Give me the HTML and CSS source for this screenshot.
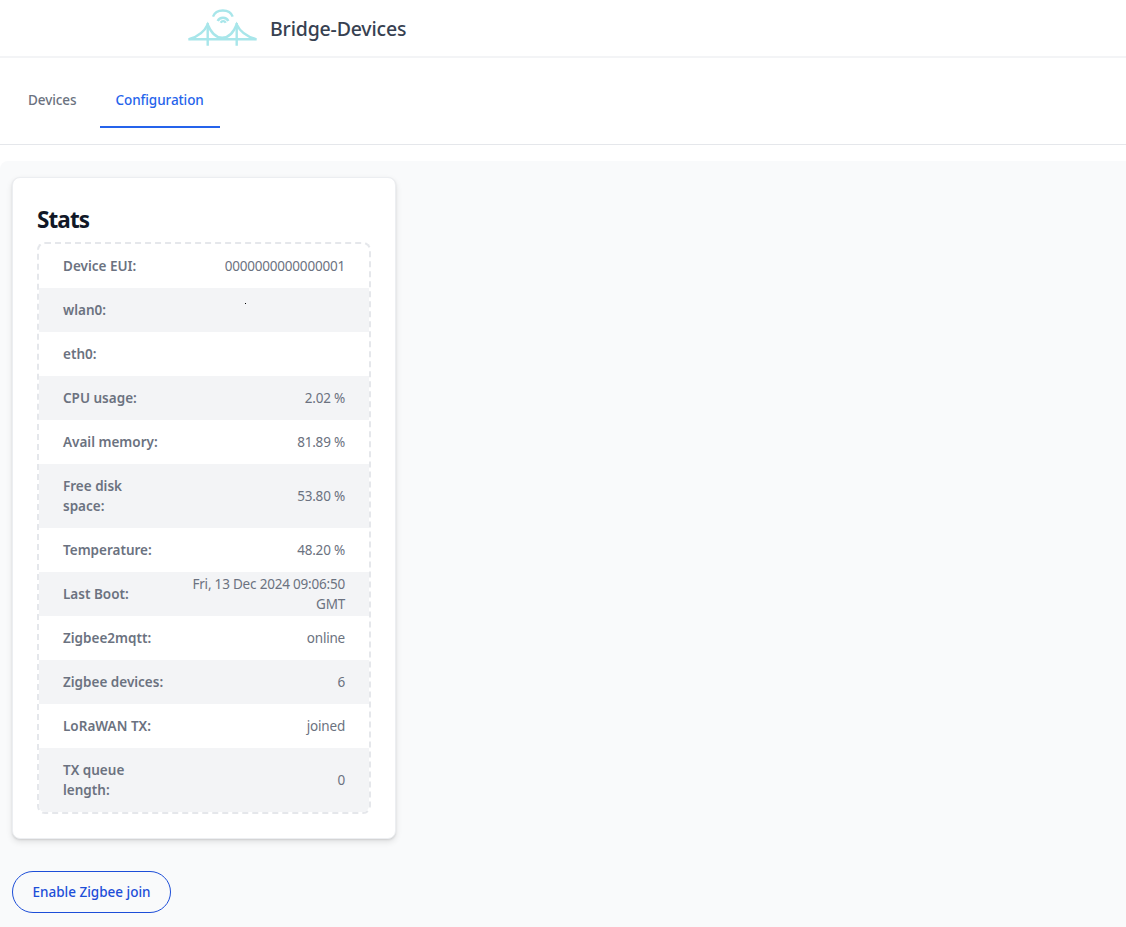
FILE: index.html
```html
<!DOCTYPE html>
<html lang="en">
<head>
    <meta charset="UTF-8">
    <meta name="viewport" content="width=device-width, initial-scale=1.0">
    <title>Bridge-Devices</title>
    <link rel="stylesheet" href="styles.css">
</head>
<body>

<header class="topbar">
    <svg class="logo" width="70" height="46" viewBox="0 0 70 46" fill="none" stroke="#a8e6ea" stroke-width="2.400">
        <path d="M0.300 34.300H68.700"/>
        <path d="M19.700 18V40.700M48.700 18V40.700"/>
        <path d="M1.500 34C10 31.500 16.500 26.500 19.700 19.500C23 27.500 28 32.800 34.200 32.800C40.400 32.800 45.500 27.500 48.700 19.500C52 26.500 59 31.500 67.500 34"/>
        <path d="M25 11.700C28 3.400 41.700 3.400 44.700 11.700"/>
        <path d="M29.700 16C31.500 11.600 38.500 11.600 40.300 16"/>
        <path d="M32.700 17.800C33.800 15.600 36.600 15.600 37.700 17.800"/>
    </svg>
    <span class="brand">Bridge-Devices</span>
</header>

<nav class="tabs">
    <a class="tab" href="#">Devices</a>
    <a class="tab active" href="#">Configuration</a>
</nav>

<main class="content">
    <section class="card">
        <h2>Stats</h2>
        <div class="stats-box">
            <table class="stats">
                <tbody>
                    <tr><th>Device EUI:</th><td>0000000000000001</td></tr>
                    <tr><th>wlan0:</th><td class="has-speck"><span class="speck"></span></td></tr>
                    <tr><th>eth0:</th><td></td></tr>
                    <tr><th>CPU usage:</th><td>2.02 %</td></tr>
                    <tr><th>Avail memory:</th><td>81.89 %</td></tr>
                    <tr><th>Free disk space:</th><td>53.80 %</td></tr>
                    <tr><th>Temperature:</th><td>48.20 %</td></tr>
                    <tr><th>Last Boot:</th><td>Fri, 13 Dec 2024 09:06:50 GMT</td></tr>
                    <tr><th>Zigbee2mqtt:</th><td>online</td></tr>
                    <tr><th>Zigbee devices:</th><td>6</td></tr>
                    <tr><th>LoRaWAN TX:</th><td>joined</td></tr>
                    <tr><th>TX queue length:</th><td>0</td></tr>
                </tbody>
            </table>
        </div>
    </section>
    <button class="join-btn" type="button">Enable Zigbee join</button>
</main>

</body>
</html>
```

FILE: styles.css
```css
* {
    box-sizing: border-box;
}
body {
    margin: 0;
    background: #fff;
    font-family: "Noto Sans", "Open Sans", sans-serif;
    font-size: 13.5px;
    line-height: 20px;
    color: #6b7280;
}
.topbar {
    display: flex;
    align-items: center;
    height: 58px;
    padding-left: 188px;
    border-bottom: 2px solid #f3f4f6;
}
.logo {
    display: block;
}
.brand {
    margin: 2px 0 0 12px;
    font-size: 19.5px;
    line-height: 28px;
    letter-spacing: -0.18px;
    font-weight: 500;
    color: #374151;
}
.tabs {
    display: flex;
    gap: 7px;
    height: 87px;
    padding: 16px 0 16px 12px;
    border-bottom: 1px solid #e5e7eb;
}
.tab {
    padding: 16px;
    height: 54px;
    border-bottom: 2px solid transparent;
    color: #6b7280;
    font-weight: 500;
    letter-spacing: -0.08px;
    text-decoration: none;
}
.tab.active {
    color: #2563eb;
    border-bottom-color: #2563eb;
}
.content {
    margin-top: 16px;
    padding: 16px 12px 14px;
    height: 766px;
    background: #f9fafb;
    border-top-left-radius: 8px;
}
.card {
    width: 384px;
    padding: 24px;
    background: #fff;
    border: 1px solid #eceef1;
    border-radius: 8px;
    box-shadow: 0 1px 2px rgba(0, 0, 0, 0.1), 0 3px 6px rgba(0, 0, 0, 0.1);
}
.card h2 {
    margin: 0 0 6px;
    padding-top: 2px;
    font-size: 22.5px;
    line-height: 32px;
    letter-spacing: -0.9px;
    font-weight: 700;
    color: #111827;
}
.stats-box {
    border: 2px dashed #e5e7eb;
    border-radius: 8px;
    overflow: hidden;
}
.stats {
    width: 100%;
    border-collapse: collapse;
    table-layout: fixed;
}
.stats tr:nth-child(even) {
    background: #f3f4f6;
}
.stats th {
    width: 146px;
    padding: 12px 20px 12px 24px;
    text-align: left;
    font-weight: 600;
}
.stats td {
    height: 44px;
    padding: 2px 24px 2px 0;
    text-align: right;
    letter-spacing: -0.2px;
}
.stats .has-speck {
    position: relative;
}
.speck {
    position: absolute;
    top: 15px;
    left: 60px;
    width: 1px;
    height: 1px;
    background: #000;
}
.join-btn {
    display: block;
    margin-top: 32px;
    width: 159px;
    height: 42px;
    padding: 0;
    background: transparent;
    border: 1px solid #1d4ed8;
    border-radius: 21px;
    color: #1d4ed8;
    font-family: inherit;
    font-size: 13.5px;
    font-weight: 500;
}
```
